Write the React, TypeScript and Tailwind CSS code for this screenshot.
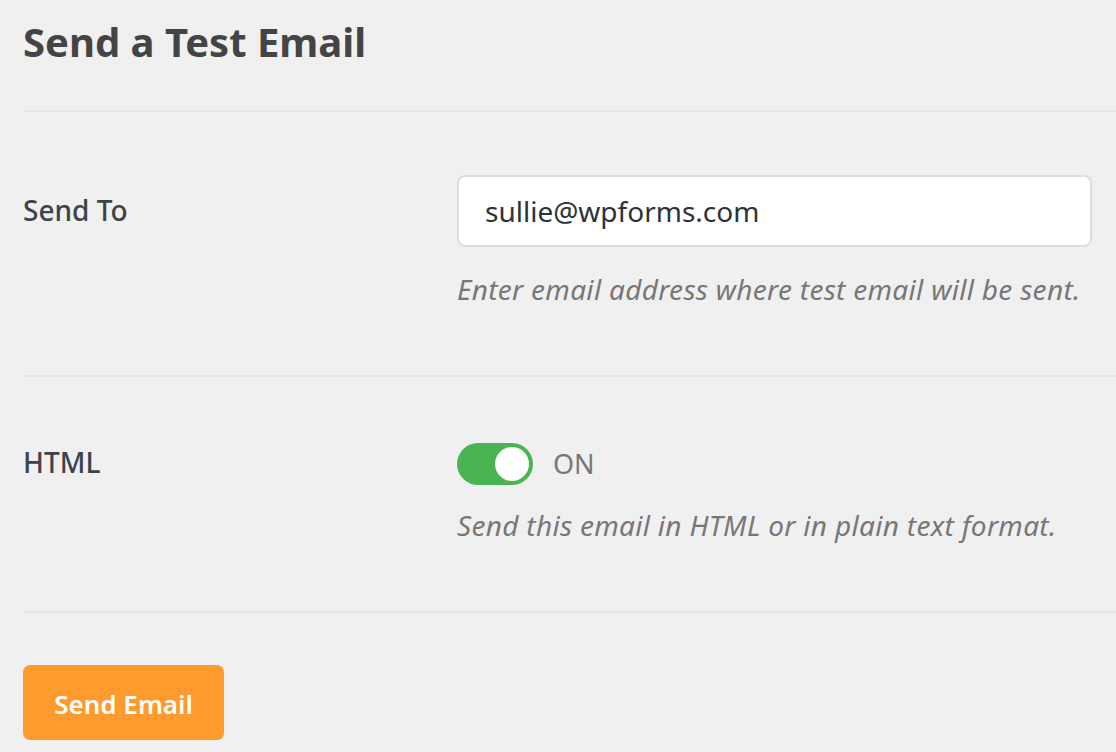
import React from 'react';

export default function App() {
  return (
    <div className="min-h-screen bg-[#f0f0f1] pl-[23px] font-['Noto_Sans',sans-serif] text-[#3c434a]">
      {/* Heading */}
      <h1 className="h-[110px] pt-[14px] text-[40px] font-bold leading-[56px] text-[#444]">
        Send a Test Email
      </h1>

      {/* Send To */}
      <div className="flex border-t-2 border-[#e4e4e4] pt-[63px] pb-[68px]">
        <div className="w-[434px] pt-[17px] text-[28px] font-medium leading-[36px]">Send To</div>
        <div className="w-[635px]">
          <div className="flex h-[72px] items-center rounded-[8px] border-2 border-[#dddddd] bg-white px-[26px] text-[28px] text-[#2c3338]">
            sullie@wpforms.com
          </div>
          <p className="mt-[24px] text-[28px] italic leading-[36px] tracking-[0.3px] text-[#777]">
            Enter email address where test email will be sent.
          </p>
        </div>
      </div>

      {/* HTML */}
      <div className="flex border-t-2 border-[#e4e4e4] pt-[66px] pb-[68px]">
        <div className="w-[434px] pt-[1px] text-[28px] font-medium leading-[36px]">HTML</div>
        <div>
          <div className="flex items-center gap-[20px]">
            <div className="flex h-[42px] w-[76px] items-center justify-end rounded-full bg-[#4ab452] pr-[4px]">
              <div className="h-[34px] w-[34px] rounded-full bg-white" />
            </div>
            <span className="text-[27px] leading-[36px] text-[#777]">ON</span>
          </div>
          <p className="mt-[22px] text-[28px] italic leading-[36px] tracking-[0.3px] text-[#777]">
            Send this email in HTML or in plain text format.
          </p>
        </div>
      </div>

      {/* Button */}
      <div className="border-t-2 border-[#e4e4e4] pt-[52px]">
        <button className="h-[75px] w-[201px] rounded-[7px] bg-[#ff9a2e] pt-[4px] text-[26px] font-semibold text-white">
          Send Email
        </button>
      </div>
    </div>
  );
}
